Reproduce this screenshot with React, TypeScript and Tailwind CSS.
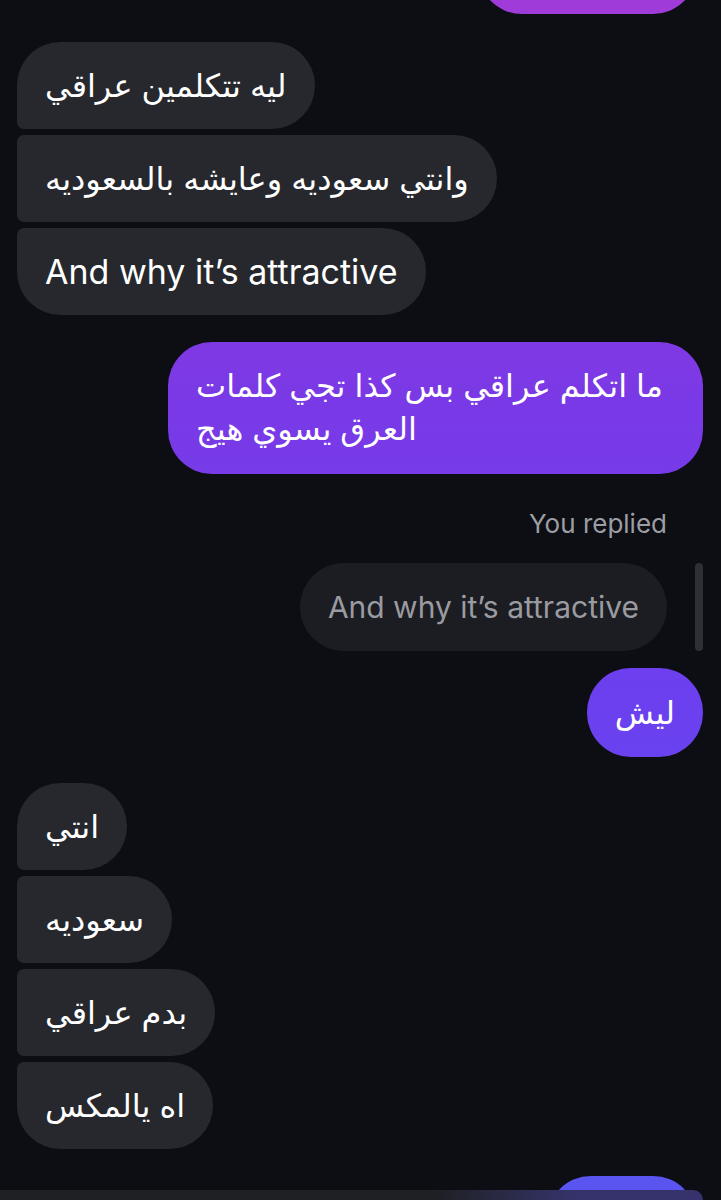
import React from 'react';

type Msg = {
    id: number;
    text: string;
    pos: 'first' | 'middle' | 'last' | 'single';
};

const theirsTop: Msg[] = [
    { id: 1, text: 'ليه تتكلمين عراقي', pos: 'first' },
    { id: 2, text: 'وانتي سعوديه وعايشه بالسعوديه', pos: 'middle' },
    { id: 3, text: 'And why it’s attractive', pos: 'last' },
];

const theirsBottom: Msg[] = [
    { id: 4, text: 'انتي', pos: 'first' },
    { id: 5, text: 'سعوديه', pos: 'middle' },
    { id: 6, text: 'بدم عراقي', pos: 'middle' },
    { id: 7, text: 'اه يالمكس', pos: 'last' },
];

const font = "font-['Inter','DejaVu_Sans',sans-serif]";

// left side corners get smaller when bubbles are grouped
const leftCorners = (pos: Msg['pos']) => {
    if (pos === 'first') return 'rounded-tl-[44px] rounded-bl-[7px]';
    if (pos === 'middle') return 'rounded-tl-[7px] rounded-bl-[7px]';
    if (pos === 'last') return 'rounded-tl-[7px] rounded-bl-[44px]';
    return 'rounded-l-[44px]';
};

const Incoming: React.FC<{ msg: Msg }> = ({ msg }) => {
    const isLatin = /^[A-Za-z]/.test(msg.text);
    return (
        <div
            dir={isLatin ? 'ltr' : 'rtl'}
            className={`self-start h-[87px] flex items-center px-[28px] bg-[#26282d] text-white rounded-r-[44px] ${isLatin ? 'text-[34px]' : 'text-[32px]'} ${leftCorners(msg.pos)}`}
        >
            {msg.text}
        </div>
    );
};

// outgoing bubbles share one gradient fixed to the viewport, like the app does
const outgoingBg =
    'bg-fixed bg-[linear-gradient(to_bottom,#a03bd8_0px,#7a39e6_400px,#6b40ef_712px,#5a55f0_1190px)]';

export default function App() {
    return (
        <div className={`w-[721px] h-[1200px] overflow-hidden bg-[#0c0e13] relative ${font}`}>
            <div className="flex flex-col px-[17px]">
                {/* partially scrolled off bubble */}
                <div className={`self-end mr-[7px] -mt-[74px] w-[219px] h-[88px] rounded-[44px] ${outgoingBg}`} />

                <div className="flex flex-col gap-[6px] mt-[28px]">
                    {theirsTop.map((m) => (
                        <Incoming key={m.id} msg={m} />
                    ))}
                </div>

                <div
                    dir="rtl"
                    className={`self-end mr-px mt-[27px] pl-[28px] pr-[40px] pt-[22px] pb-[24px] rounded-[44px] text-white text-[32px] leading-[43px] text-left whitespace-nowrap ${outgoingBg}`}
                >
                    ما اتكلم عراقي بس كذا تجي كلمات
                    <br />
                    العرق يسوي هيج
                </div>

                <div className="self-end mr-[37px] mt-[30px] text-[26px] text-[#9d9ea3]">You replied</div>

                <div className="self-end flex items-stretch gap-[28px] mt-[20px] mr-px">
                    <div className="h-[88px] flex items-center px-[28px] rounded-[44px] bg-[#1b1d22] text-[#9a9ba1] text-[30px]">
                        And why it’s attractive
                    </div>
                    <div className="w-[8px] rounded-full bg-[#2d2f34]" />
                </div>

                <div
                    dir="rtl"
                    className={`self-end mr-px mt-[17px] h-[89px] flex items-center px-[28px] rounded-[44px] text-white text-[32px] ${outgoingBg}`}
                >
                    ليش
                </div>

                <div className="flex flex-col gap-[6px] mt-[26px]">
                    {theirsBottom.map((m) => (
                        <Incoming key={m.id} msg={m} />
                    ))}
                </div>

                <div className={`self-end mr-[7px] mt-[27px] w-[150px] h-[88px] rounded-[44px] ${outgoingBg}`} />
            </div>

            {/* composer bar sliding in over the last bubble */}
            <div className="absolute left-0 bottom-0 w-[703px] h-[10px] rounded-tr-[22px] bg-gradient-to-r from-[#1f2024] from-[62%] to-[#36336c] to-[82%]" />
        </div>
    );
}
